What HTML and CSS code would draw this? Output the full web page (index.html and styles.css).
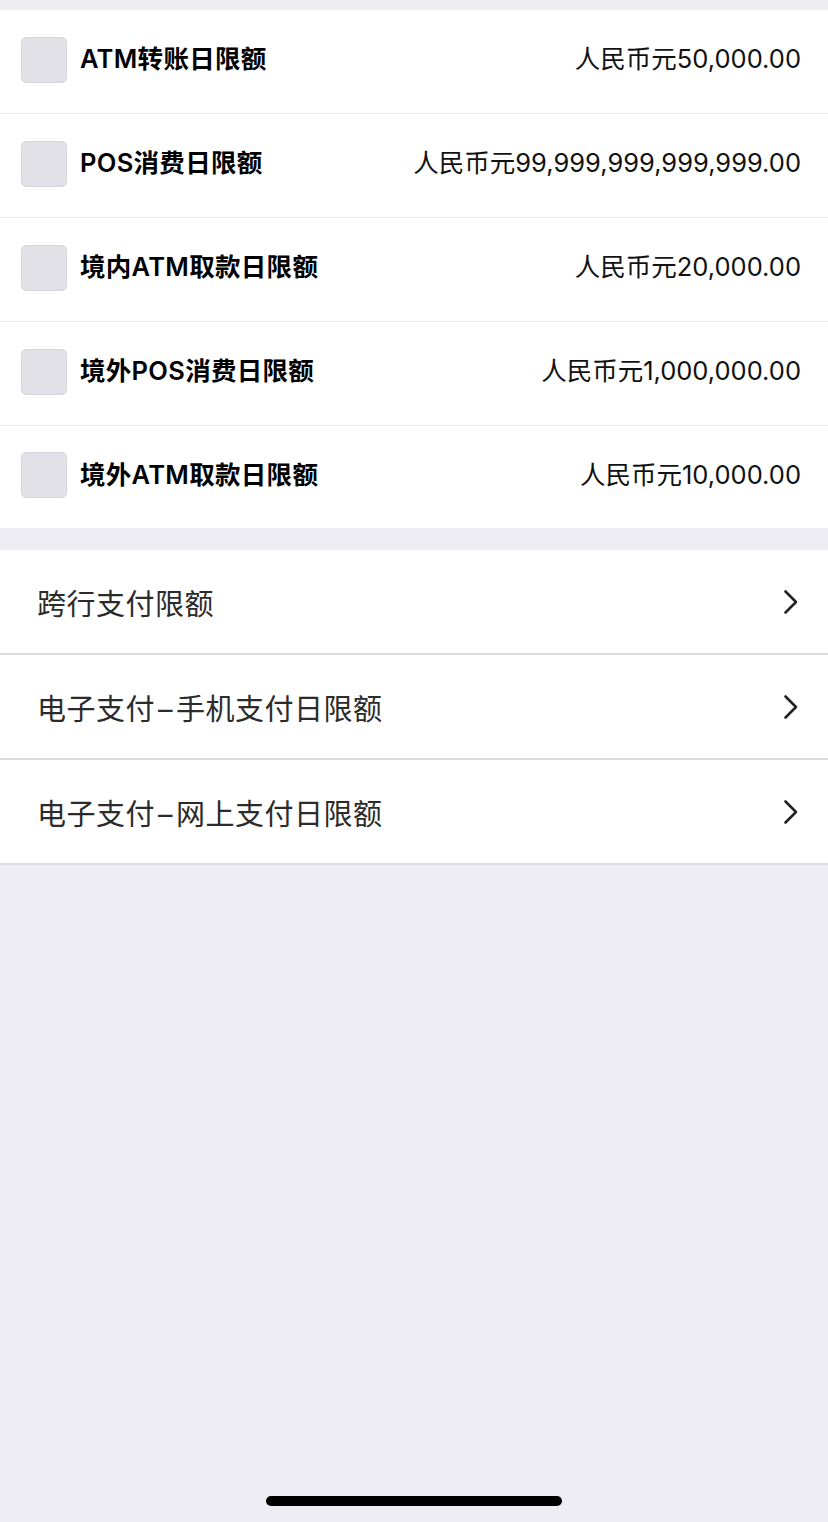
FILE: index.html
```html
<!DOCTYPE html>
<html lang="zh-CN">
<head>
<meta charset="utf-8">
<link rel="stylesheet" href="styles.css">
</head>
<body>
<div class="page">
  <section class="group limits">
    <div class="row">
      <span class="check"></span>
      <span class="label">ATM转账日限额</span>
      <span class="value">人民币元50,000.00</span>
    </div>
    <div class="row">
      <span class="check"></span>
      <span class="label">POS消费日限额</span>
      <span class="value">人民币元99,999,999,999,999.00</span>
    </div>
    <div class="row">
      <span class="check"></span>
      <span class="label">境内ATM取款日限额</span>
      <span class="value">人民币元20,000.00</span>
    </div>
    <div class="row">
      <span class="check"></span>
      <span class="label">境外POS消费日限额</span>
      <span class="value">人民币元1,000,000.00</span>
    </div>
    <div class="row">
      <span class="check"></span>
      <span class="label">境外ATM取款日限额</span>
      <span class="value">人民币元10,000.00</span>
    </div>
  </section>
  <section class="group links">
    <div class="link">
      <span class="link-text">跨行支付限额</span>
      <svg class="chev" width="16" height="26" viewBox="0 0 16 26"><path d="M2.5 2.5 L13 13 L2.5 23.5" fill="none" stroke="#222" stroke-width="2.6" stroke-linecap="round" stroke-linejoin="round"/></svg>
    </div>
    <div class="link">
      <span class="link-text">电子支付<span class="dash">–</span>手机支付日限额</span>
      <svg class="chev" width="16" height="26" viewBox="0 0 16 26"><path d="M2.5 2.5 L13 13 L2.5 23.5" fill="none" stroke="#222" stroke-width="2.6" stroke-linecap="round" stroke-linejoin="round"/></svg>
    </div>
    <div class="link">
      <span class="link-text">电子支付<span class="dash">–</span>网上支付日限额</span>
      <svg class="chev" width="16" height="26" viewBox="0 0 16 26"><path d="M2.5 2.5 L13 13 L2.5 23.5" fill="none" stroke="#222" stroke-width="2.6" stroke-linecap="round" stroke-linejoin="round"/></svg>
    </div>
  </section>
  <div class="spacer"></div>
  <div class="home-bar"><span class="home-indicator"></span></div>
</div>
</body>
</html>
```

FILE: styles.css
```css
* { box-sizing: border-box; }
html, body {
  margin: 0;
  padding: 0;
  background: #eeedf3;
}
body {
  font-family: "Inter", "Noto Sans CJK SC", sans-serif;
  color: #000;
}
.page {
  width: 828px;
  height: 1522px;
  display: flex;
  flex-direction: column;
  padding-top: 10px;
}
.group {
  background: #fff;
}
.limits .row {
  height: 104px;
  display: flex;
  align-items: center;
  padding: 0 27px 4px 21px;
  border-bottom: 1px solid #ebebef;
}
.limits .row:last-child {
  height: 102px;
  border-bottom: none;
}
.check {
  width: 46px;
  height: 46px;
  flex: none;
  border-radius: 5px;
  background: #e1e1e7;
  border: 1px solid #d6d6dc;
  margin-right: 13px;
}
.label {
  font-size: 25.5px;
  font-weight: 600;
  letter-spacing: 0.3px;
  flex: none;
  margin-bottom: 6px;
}
.value {
  margin-left: auto;
  font-size: 25.5px;
  font-weight: 400;
  color: #111;
  margin-bottom: 6px;
}
.links {
  margin-top: 22px;
}
.link {
  height: 105px;
  display: flex;
  align-items: center;
  padding: 0 29px 0 37px;
  border-bottom: 2px solid #dcdce0;
}
.link-text {
  font-size: 29px;
  letter-spacing: 0.5px;
  color: #2b2b2b;
}
.dash {
  padding: 0 3px;
}
.chev {
  margin-left: auto;
  display: block;
}
.spacer {
  flex: 1;
}
.home-bar {
  height: 26px;
  display: flex;
  justify-content: center;
  align-items: flex-start;
}
.home-indicator {
  width: 296px;
  height: 10px;
  border-radius: 5px;
  background: #000;
}
```
